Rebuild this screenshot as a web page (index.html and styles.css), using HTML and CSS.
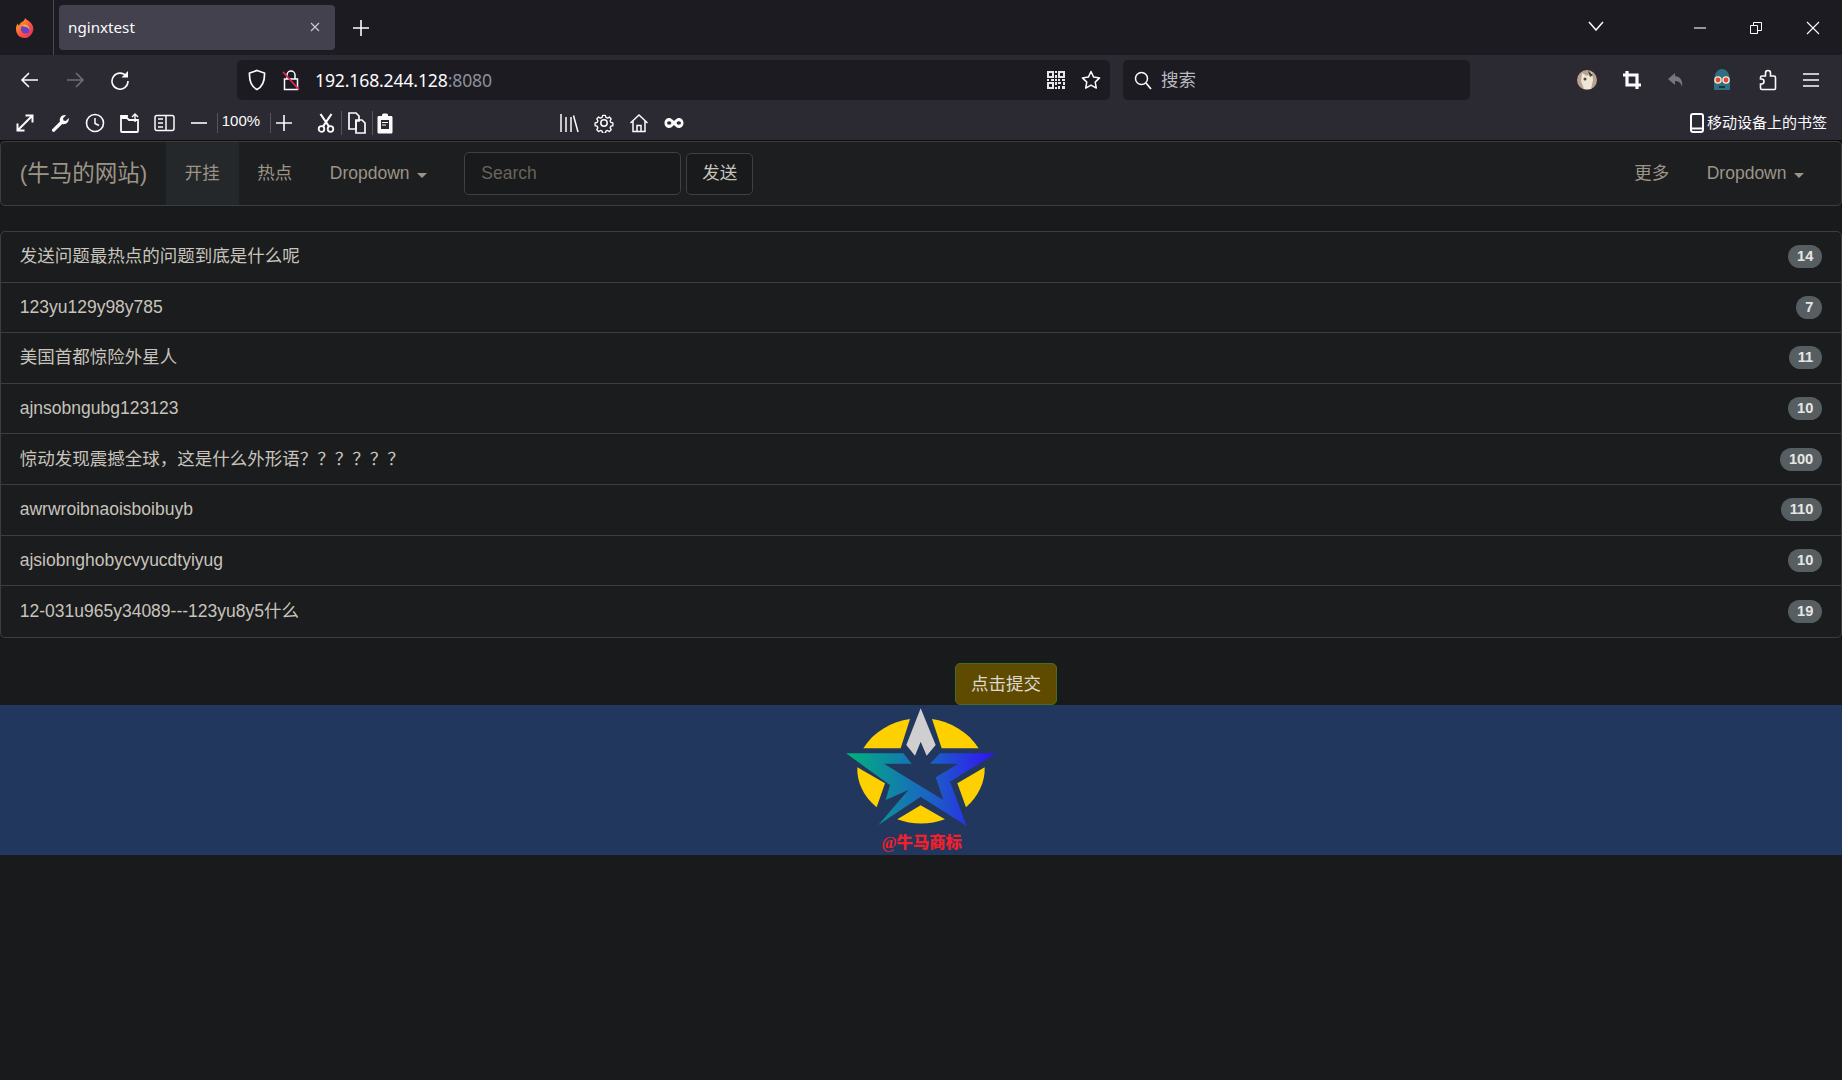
FILE: index.html
```html
<!DOCTYPE html>
<html lang="zh">
<head>
<meta charset="utf-8">
<title>nginxtest</title>
<link rel="stylesheet" href="styles.css">
</head>
<body>
<header class="chrome">
  <div class="tabstrip">
    <div class="ff-slot">
      <svg width="24" height="24" viewBox="0 0 24 24"><defs><linearGradient id="ffg" x1="0" y1="0" x2="1" y2="1"><stop offset="0" stop-color="#ffbd2e"/><stop offset=".5" stop-color="#ff5a3c"/><stop offset="1" stop-color="#e3226e"/></linearGradient></defs><path d="M12 2c1 2 4 2.500 6 5 2.500 3 3 6.500 1.500 9.500C18 20 15 22 11.500 22 6.500 22 3 18 3 13c0-2 .6-4 1.700-5.500.2 1 .6 1.700 1.300 2.200C6.500 7 9 6 10.500 5 11.500 4.200 12 3 12 2z" fill="url(#ffg)"/><circle cx="12.500" cy="13" r="4.600" fill="#6b3fc9"/><path d="M8 9.500c2-1.500 5-1.800 7 0 1.500 1.400 2 3.500 1.500 5.500-.3-2-1.500-3.500-3.500-4-1.500-.4-3.500-.5-5-1.500z" fill="#ffa436"/></svg>
    </div>
    <div class="tab">
      <span class="tab-title">nginxtest</span>
      <svg class="tab-close" width="10" height="10" viewBox="0 0 10 10"><path d="M1 1l8 8M9 1l-8 8" stroke="#c9c9cf" stroke-width="1.200"/></svg>
    </div>
    <svg class="newtab" width="16" height="16" viewBox="0 0 16 16"><path d="M8 0v16M0 8h16" stroke="#fbfbfe" stroke-width="1.600"/></svg>
    <div class="strip-fill"></div>
    <svg class="win w-list" width="16" height="10" viewBox="0 0 16 10"><path d="M1 1l7 8 7-8" fill="none" stroke="#fbfbfe" stroke-width="1.500"/></svg>
    <svg class="win w-min" width="12" height="12" viewBox="0 0 12 12"><path d="M0 6h12" stroke="#fbfbfe" stroke-width="1.100"/></svg>
    <svg class="win w-max" width="12" height="12" viewBox="0 0 12 12"><path d="M.5 3.500h7v8h-7zM3.500 3.500V.5h8v8h-4" fill="none" stroke="#fbfbfe" stroke-width="1"/></svg>
    <svg class="win w-close" width="14" height="14" viewBox="0 0 14 14"><path d="M1 1l12 12M13 1L1 13" stroke="#fbfbfe" stroke-width="1.100"/></svg>
  </div>

  <div class="navbar-ff">
    <svg class="ti t-back" width="20" height="20" viewBox="0 0 20 20"><path d="M18 10H2.500M9 3l-7 7 7 7" fill="none" stroke="#fbfbfe" stroke-width="1.600"/></svg>
    <svg class="ti t-fwd" width="20" height="20" viewBox="0 0 20 20"><path d="M2 10h15.500M11 3l7 7-7 7" fill="none" stroke="#6f6e76" stroke-width="1.600"/></svg>
    <svg class="ti t-reload" width="20" height="20" viewBox="0 0 20 20"><path d="M16.500 6.500A8 8 0 1 0 18 11" fill="none" stroke="#fbfbfe" stroke-width="1.600"/><path d="M18 1v6.500h-6.500z" fill="#fbfbfe"/></svg>
    <div class="urlbar">
      <svg class="u-shield" width="18" height="22" viewBox="0 0 18 22"><path d="M9 1.500l7.500 2.500c.3 7-1.500 13.500-7.500 16.500C3 17.500 1.200 11 1.500 4z" fill="none" stroke="#fbfbfe" stroke-width="1.700"/></svg>
      <svg class="u-lock" width="18" height="22" viewBox="0 0 18 22"><path d="M5 10V6a4 4 0 0 1 8 0v4" fill="none" stroke="#fbfbfe" stroke-width="1.500"/><path d="M2.500 10h13v10.500h-13z" fill="none" stroke="#fbfbfe" stroke-width="1.500"/><path d="M1 3l16 17.500" stroke="#e22850" stroke-width="1.800"/></svg>
      <span class="url"><span class="url-host">192.168.244.128</span><span class="url-port">:8080</span></span>
      <span class="grow"></span>
      <svg class="u-qr" width="18" height="18" viewBox="0 0 18 18"><path d="M0 0h7v7H0zM2 2v3h3V2zM11 0h7v7h-7zM13 2v3h3V2zM0 11h7v7H0zM2 13v3h3v-3zM8 0h2v2H8zM8 4h2v3H8zM0 8h2v2H0zM4 8h3v2H4zM8 8h2v2H8zM11 8h2v2h-2zM15 8h3v2h-3zM8 11h2v3H8zM11 11h3v2h-3zM16 11h2v3h-2zM11 15h2v3h-2zM15 15h3v3h-3zM8 16h2v2H8z" fill="#e6e6ea" fill-rule="evenodd"/></svg>
      <svg class="u-star" width="20" height="20" viewBox="0 0 20 20"><path d="M10 1.500l2.600 5.600 6 .8-4.400 4.200 1.100 6-5.300-3-5.300 3 1.100-6L1.400 7.900l6-.8z" fill="none" stroke="#fbfbfe" stroke-width="1.500" stroke-linejoin="round"/></svg>
    </div>
    <div class="searchbar">
      <svg width="18" height="19" viewBox="0 0 18 19"><circle cx="7.500" cy="7.500" r="6" fill="none" stroke="#fbfbfe" stroke-width="1.500"/><path d="M12 12l5 6" stroke="#fbfbfe" stroke-width="1.700"/></svg>
      <span class="search-text">搜索</span>
    </div>
    <div class="ext-icons">
      <svg class="ti" width="22" height="22" viewBox="0 0 22 22"><circle cx="11" cy="11" r="10" fill="#b9a38f"/><path d="M6 4l5 3 5-4 1 8-2 9H8L5 12z" fill="#efe6da"/><path d="M12 2l5 4-3 2z" fill="#3a3d3f"/><circle cx="9" cy="10" r="1.500" fill="#5c4436"/></svg>
      <svg class="ti" width="20" height="20" viewBox="0 0 20 20"><path d="M5 1v14h14M1 5h14v14" fill="none" stroke="#fbfbfe" stroke-width="3.200"/></svg>
      <svg class="ti" width="20" height="20" viewBox="0 0 20 20"><path d="M9 3L2 9l7 6v-4c4 0 6 2 7 6 1-6-1-10-7-11z" fill="#77767d"/></svg>
      <svg class="ti" width="22" height="24" viewBox="0 0 22 24"><path d="M3 13C3 6 6 1 11 1s8 5 8 12v9H3z" fill="#2f6f7f"/><circle cx="7" cy="12" r="3.800" fill="#f1e6d8"/><circle cx="15" cy="12" r="3.800" fill="#f1e6d8"/><circle cx="7" cy="12" r="2.400" fill="#e3492f"/><circle cx="15" cy="12" r="2.400" fill="#e3492f"/><path d="M8 19h6" stroke="#10262c" stroke-width="1.500"/></svg>
      <svg class="ti" width="20" height="22" viewBox="0 0 20 22"><path d="M11 1.500c1.500 0 2.500 1 2.500 2.500v3H17c.9 0 1.500.6 1.500 1.500v11c0 .6-.5 1-1 1H5c-1 0-1.500-.6-1.500-1.500v-4h1c1.500 0 2.500-1 2.500-2.500S6 10 4.500 10h-1V8.500C3.500 7.600 4.100 7 5 7h3.500V4c0-1.500 1-2.500 2.500-2.500z" fill="none" stroke="#fbfbfe" stroke-width="1.600"/></svg>
      <svg class="ti t-menu" width="18" height="16" viewBox="0 0 18 16"><path d="M1 2h16M1 8h16M1 14h16" stroke="#fbfbfe" stroke-width="1.700"/></svg>
    </div>
  </div>

  <div class="bookmarks">
    <span class="bi"><svg width="20" height="20" viewBox="0 0 20 20"><path d="M3 17L17 3M10.500 2.500H17.500V9.500M9.500 17.500H2.500V10.500" fill="none" stroke="#fbfbfe" stroke-width="2"/></svg></span>
    <span class="bi"><svg width="20" height="20" viewBox="0 0 20 20"><path d="M2 16.500l8-8c-1-3 1-6.500 5-6.500l1 .2-3 3 .5 2.300 2.300.5 3-3c.5 4-3 7-6.500 6l-8 7.800c-1 .8-3-1-2.300-2.300z" fill="#fbfbfe"/></svg></span>
    <span class="bi"><svg width="20" height="20" viewBox="0 0 20 20"><circle cx="10" cy="10" r="8.500" fill="none" stroke="#fbfbfe" stroke-width="1.600"/><path d="M10 5v5.500l4 2" fill="none" stroke="#fbfbfe" stroke-width="1.500"/></svg></span>
    <span class="bi"><svg width="22" height="20" viewBox="0 0 22 20"><path d="M2 5h6l2 2h9v11a1 1 0 0 1-1 1H3a1 1 0 0 1-1-1zM2 5V3h6v2" fill="none" stroke="#fbfbfe" stroke-width="1.800"/><path d="M16 9V1.500M13 4l3-3 3 3" fill="none" stroke="#fbfbfe" stroke-width="1.400"/></svg></span>
    <span class="bi"><svg width="21" height="18" viewBox="0 0 21 18"><rect x="1" y="1.500" width="19" height="15" rx="2" fill="none" stroke="#fbfbfe" stroke-width="1.500"/><path d="M12 1.500v15" stroke="#fbfbfe" stroke-width="1.500"/><path d="M4 5h5M4 9h5M4 13h5" stroke="#fbfbfe" stroke-width="1.600"/></svg></span>
    <span class="bi"><svg width="16" height="16" viewBox="0 0 16 16"><path d="M0 8h16" stroke="#fbfbfe" stroke-width="1.600"/></svg></span>
    <span class="sep"></span>
    <span class="zoom-level">100%</span>
    <span class="sep"></span>
    <span class="bi bi-plus"><svg width="16" height="16" viewBox="0 0 16 16"><path d="M0 8h16M8 0v16" stroke="#fbfbfe" stroke-width="1.600"/></svg></span>
    <span class="bi bi-cut"><svg width="18" height="20" viewBox="0 0 18 20"><circle cx="4.500" cy="16" r="2.800" fill="none" stroke="#fbfbfe" stroke-width="1.800"/><circle cx="13.500" cy="16" r="2.800" fill="none" stroke="#fbfbfe" stroke-width="1.800"/><path d="M6 13.500L14.500 1M12 13.500L3.500 1" stroke="#fbfbfe" stroke-width="2.200"/></svg></span>
    <span class="sep sep-tall"></span>
    <span class="bi bi-copy"><svg width="18" height="22" viewBox="0 0 18 22"><path d="M1 1h7l3 3v5H8v8H1z" fill="none" stroke="#fbfbfe" stroke-width="1.700"/><path d="M8 8h6l3 3v10H8z" fill="none" stroke="#fbfbfe" stroke-width="1.700"/></svg></span>
    <span class="sep sep-tall"></span>
    <span class="bi bi-paste"><svg width="16" height="22" viewBox="0 0 16 22"><path d="M2 4h3V2.500C5 1 11 1 11 2.500V4h3c1 0 1.500.5 1.500 1.500V20c0 1-.5 1.500-1.500 1.500H2C1 21.500.5 21 .5 20V5.500C.5 4.500 1 4 2 4z" fill="#fbfbfe"/><path d="M4 8h8v9H4z" fill="#2b2a33"/><path d="M5 10.500h6M5 13h4" stroke="#fbfbfe" stroke-width="1.200"/></svg></span>
    <span class="bi bi-lib"><svg width="20" height="20" viewBox="0 0 20 20"><path d="M2 1v18M7 4v15M12 4v15M14.500 2.500L19 19" stroke="#fbfbfe" stroke-width="1.500"/></svg></span>
    <span class="bi"><svg width="20" height="20" viewBox="0 0 20 20"><path d="M8.500 1.500h3l.6 2.300 1.800.8 2.100-1.200 2 2.100-1.200 2 .8 1.800 2.300.7v3l-2.300.6-.8 1.800 1.200 2-2 2.100-2.100-1.200-1.800.8-.6 2.300h-3l-.6-2.300-1.800-.8-2.100 1.200-2-2.100 1.200-2-.8-1.800-2.300-.6v-3l2.300-.7.8-1.800-1.200-2 2-2.100 2.100 1.200 1.800-.8z" transform="translate(1 1) scale(.9)" fill="none" stroke="#fbfbfe" stroke-width="1.500" stroke-linejoin="round"/><circle cx="10" cy="10" r="3.200" fill="none" stroke="#fbfbfe" stroke-width="1.500"/></svg></span>
    <span class="bi"><svg width="20" height="20" viewBox="0 0 20 20"><path d="M1.500 10L10 2l8.500 8M4 8v10.500h12V8M8 18.500V12.500h4v6" fill="none" stroke="#fbfbfe" stroke-width="1.500"/></svg></span>
    <span class="bi"><svg width="20" height="12" viewBox="0 0 20 12"><path d="M5 1c2.500 0 3.500 2 5 3 1.500-1 2.500-3 5-3 2.500 0 4.500 2.200 4.500 5S17.500 11 15 11c-2.500 0-3.500-2-5-3-1.500 1-2.500 3-5 3-2.500 0-4.500-2.200-4.500-5S2.500 1 5 1z" fill="#fbfbfe"/><ellipse cx="5.200" cy="6" rx="2.200" ry="1.800" fill="#2b2a33"/><ellipse cx="14.800" cy="6" rx="2.200" ry="1.800" fill="#2b2a33"/></svg></span>
    <span class="grow"></span>
    <svg class="phone" width="14" height="20" viewBox="0 0 14 20"><rect x="1" y="1" width="12" height="18" rx="2" fill="none" stroke="#fbfbfe" stroke-width="2"/><path d="M1 15.500h12" stroke="#fbfbfe" stroke-width="2"/></svg>
    <span class="mobile-text">移动设备上的书签</span>
  </div>
</header>

<nav class="site-nav">
  <span class="brand">(牛马的网站)</span>
  <a class="nav-item active">开挂</a>
  <a class="nav-item">热点</a>
  <a class="nav-item">Dropdown<i class="caret"></i></a>
  <form class="nav-form">
    <span class="nav-input">Search</span>
    <span class="nav-send">发送</span>
  </form>
  <span class="grow"></span>
  <a class="nav-item">更多</a>
  <a class="nav-item">Dropdown<i class="caret"></i></a>
</nav>

<ul class="list">
  <li class="row"><span>发送问题最热点的问题到底是什么呢</span><span class="badge">14</span></li>
  <li class="row"><span>123yu129y98y785</span><span class="badge">7</span></li>
  <li class="row"><span>美国首都惊险外星人</span><span class="badge">11</span></li>
  <li class="row"><span>ajnsobngubg123123</span><span class="badge">10</span></li>
  <li class="row"><span>惊动发现震撼全球，这是什么外形语？？？？？？</span><span class="badge">100</span></li>
  <li class="row"><span>awrwroibnaoisboibuyb</span><span class="badge">110</span></li>
  <li class="row"><span>ajsiobnghobycvyucdtyiyug</span><span class="badge">10</span></li>
  <li class="row"><span>12-031u965y34089---123yu8y5什么</span><span class="badge">19</span></li>
</ul>

<div class="submit-row"><span class="submit">点击提交</span></div>

<footer class="footer">
  <svg width="150" height="150" viewBox="138 165 450 450">
    <defs><linearGradient id="starg" x1="138" y1="0" x2="587" y2="0" gradientUnits="userSpaceOnUse"><stop offset="0" stop-color="#00b27a"/><stop offset=".55" stop-color="#1a64c4"/><stop offset="1" stop-color="#3310f5"/></linearGradient></defs>
    <g fill="#ffd000">
      <path d="M190 295C220 245 275 215 330 207L302 295z"/>
      <path d="M396 207C450 215 505 245 536 295H425z"/>
      <path d="M172 352L255 400 230 472C190 440 170 395 172 352z"/>
      <path d="M554 352L472 400 498 472C535 440 556 395 554 352z"/>
      <path d="M292 508L362 466 435 508C390 525 335 525 292 508z"/>
    </g>
    <path d="M362 175L407 285 380 317 362 275 345 317 319 285z" fill="#cfcfcf"/>
    <path d="M138 310H310L335 341H252L430 450 407 382 475 341H390L420 310H587L450 395 500 528 362 440 235 525 325 420 257 450 270 405z" fill="url(#starg)"/>
    <text class="logo-text" x="365" y="595" text-anchor="middle">@牛马商标</text>
  </svg>
</footer>
</body>
</html>
```
FILE: styles.css
```css
* { box-sizing: border-box; }
html, body { margin: 0; padding: 0; }
body {
  background: #181a1b;
  color: #c8c3bc;
  font-family: "Liberation Sans", "Noto Sans CJK SC", sans-serif;
  font-size: 17.5px;
  line-height: 25px;
  height: 1080px;
  overflow: hidden;
}
.grow { flex: 1; }

/* Browser chrome */
.chrome { height: 141px; border-bottom: 1px solid #0c0c0d; background: #2b2a33; }
.tabstrip { height: 55px; background: #1c1b22; display: flex; align-items: center; }
.ff-slot { width: 54px; height: 55px; border-right: 1px solid #4a4952; padding-left: 13px; display: flex; align-items: center; }
.tab { width: 276px; height: 45px; margin-left: 5px; margin-top: -1px; background: #42414d; border-radius: 4px; display: flex; align-items: center; padding: 0 15px 0 9px; }
.tab-title { flex: 1; color: #fbfbfe; font-size: 15.2px; font-family: "Noto Sans", "Liberation Sans", sans-serif; }
.newtab { margin-left: 18px; }
.strip-fill { flex: 1; }
.win { flex: none; }
.w-list { margin-right: 90px; margin-bottom: 3px; }
.w-min { margin-right: 44px; }
.w-max { margin-right: 44px; }
.w-close { margin-right: 22px; }

.navbar-ff { height: 50px; display: flex; align-items: center; padding-left: 20px; }
.ti { flex: none; }
.t-fwd { margin-left: 25px; }
.t-reload { margin-left: 25px; }
.urlbar { width: 873px; height: 40px; margin-left: 107px; background: #1c1b22; border-radius: 5px; display: flex; align-items: center; padding: 0 9.500px 0 11px; }
.u-shield { margin-right: 16px; }
.u-lock { margin-right: 15px; }
.url { font-size: 17.6px; font-family: "Noto Sans", "Liberation Sans", sans-serif; letter-spacing: -0.15px; }
.url-host { color: #fbfbfe; }
.url-port { color: #8f8f97; }
.u-qr { margin-right: 16px; }
.searchbar { width: 347px; height: 40px; margin-left: 13px; background: #1c1b22; border-radius: 5px; display: flex; align-items: center; padding-left: 11px; }
.search-text { margin-left: 9px; color: #b9b9c0; font-size: 17.5px; }
.ext-icons { flex: 1; display: flex; align-items: center; padding-left: 106px; gap: 24.200px; }
.t-menu { margin-left: 1px; }

.bookmarks { height: 35px; display: flex; align-items: center; padding-left: 8px; padding-right: 15px; }
.bi { width: 34.800px; display: flex; justify-content: center; align-items: center; flex: none; }
.sep { width: 1px; height: 20px; background: #55545c; flex: none; }
.sep-tall { height: 24px; }
.zoom-level { width: 52px; padding-left: 4px; text-align: left; color: #fbfbfe; font-size: 15px; margin-top: -4px; }
.bi-plus { width: 27px; }
.bi-cut { margin-left: 13px; width: 30px; }
.bi-copy { width: 30px; }
.bi-paste { width: 24px; }
.bi-lib { margin-left: 155px; }
.phone { margin-right: 3px; }
.mobile-text { color: #fbfbfe; font-size: 15px; }

/* Site navbar */
.site-nav { height: 65px; margin-bottom: 25px; background: #1c1e1f; border: 1.25px solid #3a3e41; border-radius: 5px; display: flex; align-items: center; padding-right: 18.750px; color: #9d9488; }
.brand { font-size: 22.500px; padding: 0 18.750px; color: #9d9488; }
.nav-item { height: 100%; display: flex; align-items: center; padding: 0 18.750px; color: #9d9488; }
.nav-item.active { background: #25282a; }
.caret { display: inline-block; margin-left: 7px; margin-top: 3px; border-top: 5px solid #9d9488; border-left: 5px solid transparent; border-right: 5px solid transparent; }
.nav-form { display: flex; align-items: center; gap: 5px; margin-left: 19px; }
.nav-input { width: 217px; height: 42.500px; border: 1.25px solid #3c4144; border-radius: 5px; background: #181a1b; color: #6a645b; padding-left: 16px; display: flex; align-items: center; }
.nav-send { width: 67px; height: 42px; border: 1.25px solid #3c4144; border-radius: 5px; background: #181a1b; color: #c8c3bc; display: flex; align-items: center; justify-content: center; }

/* List */
.list { list-style: none; margin: 0 0 25.700px; padding: 0; border: 1.25px solid #3a3e41; border-radius: 5px; background: #1a1c1d; }
.row { height: 50.600px; display: flex; align-items: center; justify-content: space-between; padding: 0 18.750px; border-bottom: 1.25px solid #3a3e41; }
.row:last-child { border-bottom: 0; }
.badge { background: #575e62; color: #e8e6e3; font-size: 14.600px; font-weight: 700; line-height: 15px; padding: 4px 9px; border-radius: 12px; min-width: 25px; text-align: center; }

.submit-row { padding-left: 955px; height: 42px; }
.submit { display: flex; width: 102px; height: 42px; align-items: center; justify-content: center; background: #5f4b00; border: 1.25px solid #3f6f22; border-radius: 5px; color: #dcd8d2; }

.footer { height: 150px; background: #22375e; display: flex; justify-content: center; }
.logo-text { fill: #f0202c; font-size: 49px; font-weight: 900; font-family: "Liberation Serif", "Noto Sans CJK SC", serif; }
```
